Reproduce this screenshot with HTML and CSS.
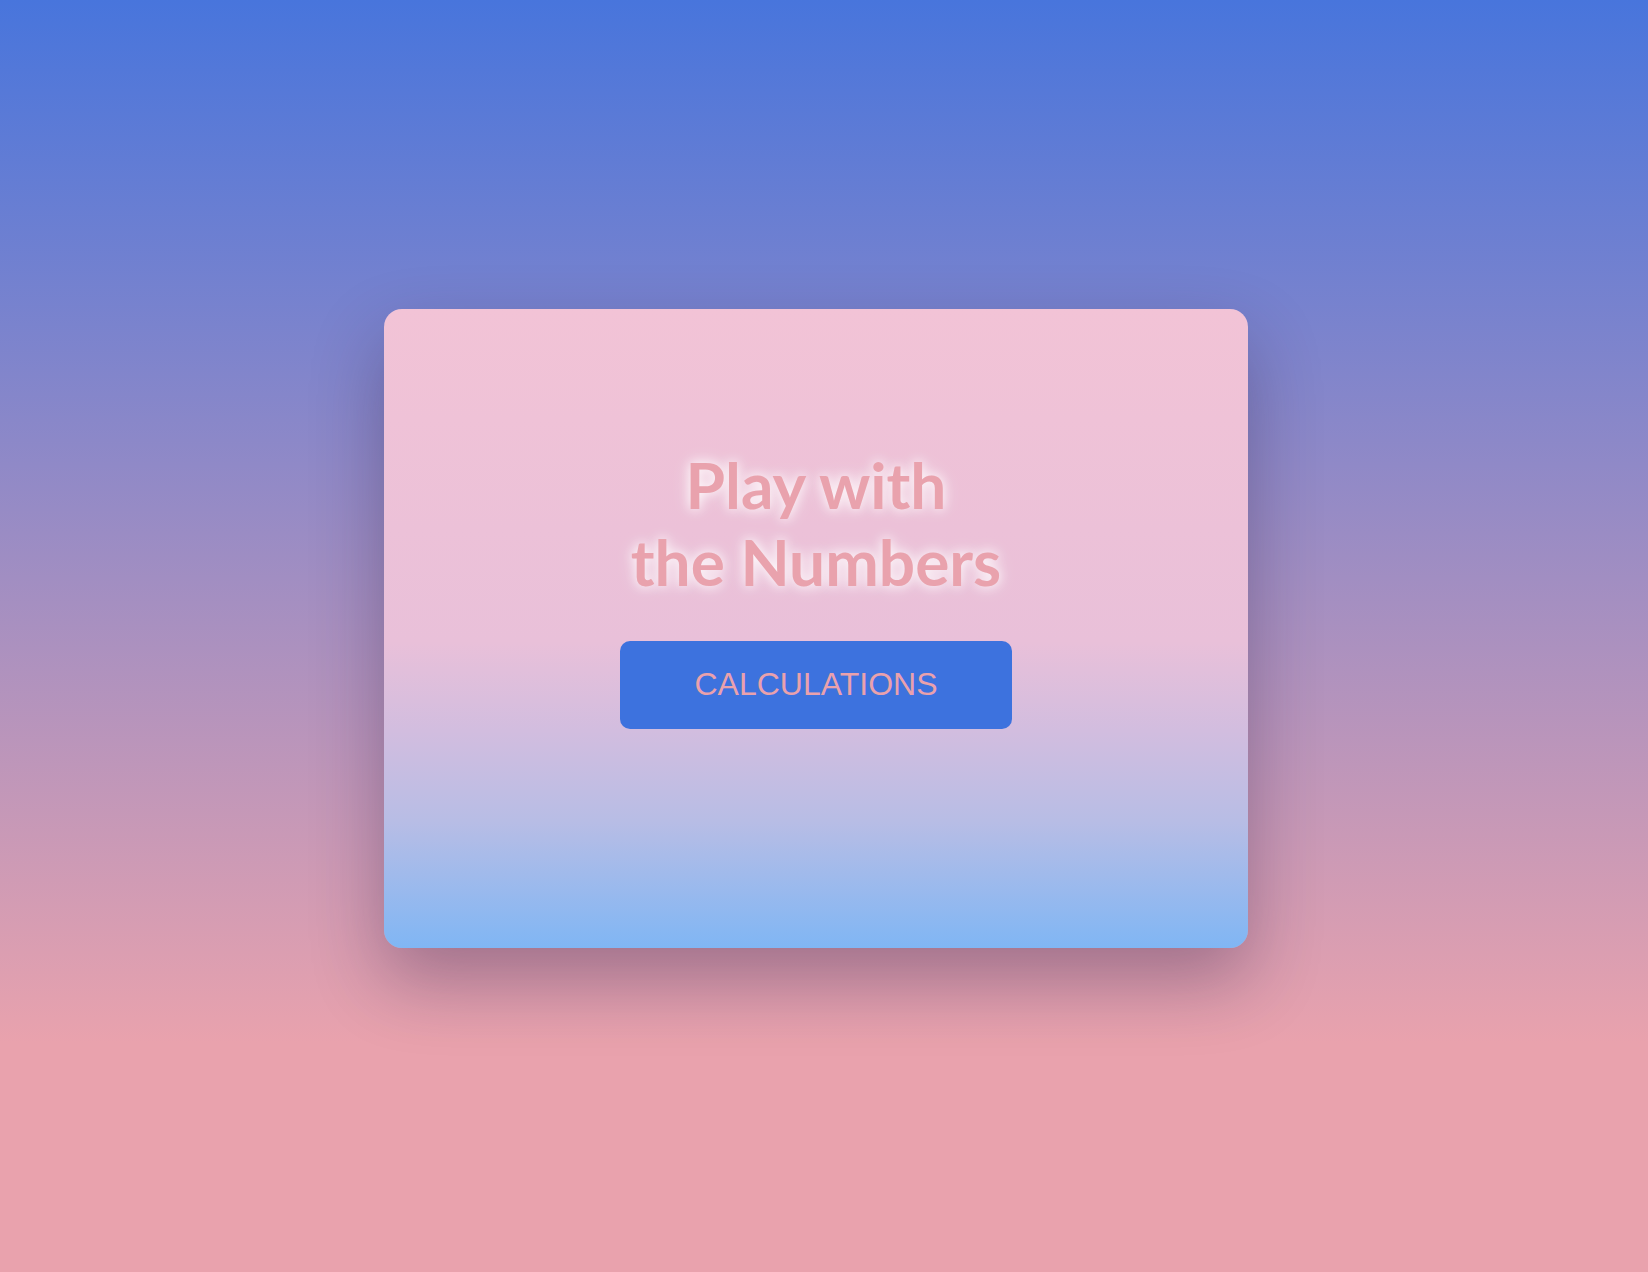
FILE: index.html
```html
<!DOCTYPE html>
<html lang="en">
<head>
<meta charset="utf-8">
<title>Play with the Numbers</title>
<link rel="stylesheet" href="styles.css">
</head>
<body>
  <main class="page">
    <section class="card">
      <h1 class="title">Play with<br>the Numbers</h1>
      <button class="btn" type="button">CALCULATIONS</button>
    </section>
  </main>
</body>
</html>
```

FILE: styles.css
```css
html, body {
  margin: 0;
  padding: 0;
  height: 100%;
}

body {
  background: linear-gradient(to bottom, #4875dc 0%, #e9a2ad 82%, #e9a2ad 100%);
  font-family: "Lato", "Liberation Sans", sans-serif;
}

.page {
  height: 1272px;
  box-sizing: border-box;
  padding: 309px 400px 0 384px;
}

.card {
  width: 864px;
  height: 639px;
  box-sizing: border-box;
  border-radius: 18px;
  padding-top: 138px;
  display: flex;
  flex-direction: column;
  align-items: center;
  background: linear-gradient(to bottom, #f2c3d6 0%, #e9c0d9 52%, #d2bddf 66%, #b8bde5 80%, #80b6f4 100%);
  box-shadow: 0 32px 72px rgba(40, 20, 60, 0.33);
}

.title {
  margin: 0;
  font-family: "Lato", sans-serif;
  font-weight: 700;
  font-size: 64px;
  line-height: 1.2;
  text-align: center;
  color: #e9a2ad;
  text-shadow: 0 0 12px #ffffff, 0 0 20px rgba(255, 255, 255, 0.5);
}

.btn {
  margin-top: 40px;
  width: 392px;
  height: 88px;
  border: none;
  border-radius: 10px;
  background: #3d72de;
  color: #eaa1ac;
  font-family: "Liberation Sans", Arial, sans-serif;
  font-size: 32px;
  padding: 0;
  cursor: pointer;
}
```
